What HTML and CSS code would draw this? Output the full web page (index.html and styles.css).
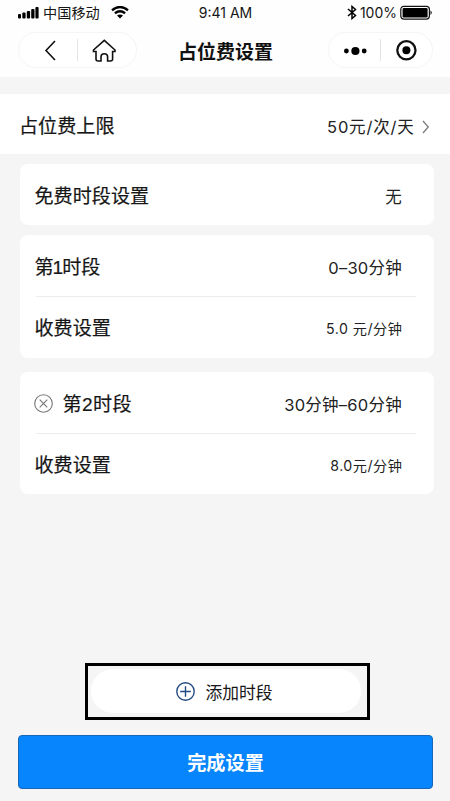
FILE: index.html
```html
<!DOCTYPE html>
<html lang="zh-CN">
<head>
<meta charset="utf-8">
<title>占位费设置</title>
<link rel="stylesheet" href="styles.css">
</head>
<body>
<header class="header">
  <div class="status">
    <div class="status-left">
      <svg class="signal" width="21" height="12" viewBox="0 0 21 12"><rect x="0" y="7" width="3" height="4.5" rx="1"/><rect x="4.3" y="5.5" width="3.3" height="6" rx="1"/><rect x="8.8" y="4" width="3.3" height="7.5" rx="1"/><rect x="13.2" y="2" width="3.3" height="9.5" rx="1"/><rect x="17.4" y="0" width="3.2" height="11.5" rx="1"/></svg>
      <span class="carrier">中国移动</span>
      <svg class="wifi" width="18" height="13" viewBox="0 0 18 13"><path d="M1 4.2Q9-2.2 17 4.2" /><path d="M3.9 7.2Q9 3.2 14.1 7.2"/><path class="fill" d="M6 9.5Q9 7.3 12 9.5L9 12.5Z"/></svg>
    </div>
    <div class="clock">9:41 AM</div>
    <div class="status-right">
      <svg class="bluetooth" width="10" height="15" viewBox="0 0 10 15"><path d="M1 4L8.5 10.5L5 13.5V1.5L8.5 4.5L1 11"/></svg>
      <span class="percent">100%</span>
      <svg class="battery" width="33" height="16" viewBox="0 0 33 16"><rect class="shell" x=".8" y="1.3" width="28.6" height="12.8" rx="3"/><rect x="2.6" y="3" width="25" height="9.4" rx="1.2"/><path d="M30.5 5.5Q33 7.7 30.5 10Z"/></svg>
    </div>
  </div>
  <nav class="nav">
    <div class="capsule capsule-left">
      <svg width="58" height="34" viewBox="0 0 58 34"><path d="M36 8L27 17.5L36 27"/></svg>
      <i class="split"></i>
      <svg width="57" height="34" viewBox="0 0 57 34"><path d="M15.5 17L26.3 7.4L37 17V18.5H34.6V26Q34.6 28 32.5 28H29.6V23.7Q29.6 20.7 26.3 20.7Q23 20.7 23 23.7V28H20Q18 28 18 26V18.5H15.5Z"/></svg>
    </div>
    <h1 class="title">占位费设置</h1>
    <div class="capsule capsule-right">
      <svg class="solid" width="51" height="34" viewBox="0 0 51 34"><circle cx="17.4" cy="18" r="2.4"/><circle cx="26.4" cy="18" r="4.1"/><circle cx="35.2" cy="18" r="2.4"/></svg>
      <i class="split"></i>
      <svg width="51" height="34" viewBox="0 0 51 34"><circle class="ring" cx="25.4" cy="17.3" r="9.1"/><circle class="dot" cx="25.4" cy="17.3" r="4"/></svg>
    </div>
  </nav>
</header>
<main class="content">
  <section class="limit">
    <span class="label">占位费上限</span>
    <span class="value value-limit">50元/次/天</span>
    <svg class="chevron" width="8" height="14" viewBox="0 0 8 14"><path d="M1 1L6.3 7L1 13"/></svg>
  </section>
  <section class="card card-free">
    <div class="row"><span class="label">免费时段设置</span><span class="value">无</span></div>
  </section>
  <section class="card card-first">
    <div class="row"><span class="label">第<span class="one">1</span>时段</span><span class="value">0–30分钟</span></div>
    <hr class="line">
    <div class="row"><span class="label">收费设置</span><span class="value small">5.0 元/分钟</span></div>
  </section>
  <section class="card card-second">
    <div class="row">
      <svg class="remove" width="19" height="19" viewBox="0 0 19 19"><circle cx="9.5" cy="9.5" r="8.8"/><path d="M5.7 5.7L13.3 13.3M13.3 5.7L5.7 13.3"/></svg>
      <span class="label label-second">第2时段</span><span class="value">30分钟–60分钟</span>
    </div>
    <hr class="line">
    <div class="row"><span class="label">收费设置</span><span class="value small">8.0元/分钟</span></div>
  </section>
</main>
<footer class="footer">
  <div class="frame">
    <button class="add">
      <svg width="19" height="19" viewBox="0 0 19 19"><circle cx="9.5" cy="9.5" r="8.7"/><path d="M9.5 4.2V14.8M4.2 9.5H14.8"/></svg>
      <span>添加时段</span>
    </button>
  </div>
  <button class="submit">完成设置</button>
</footer>
</body>
</html>
```
FILE: styles.css
```css
* { box-sizing: border-box; }
body {
  margin: 0;
  height: 801px;
  display: flex;
  flex-direction: column;
  overflow: hidden;
  background: #f5f5f5;
  color: #161616;
  font-family: "Liberation Sans", "Noto Sans CJK SC", sans-serif;
}
svg { display: block; flex: none; }
button { border: 0; padding: 0; font: inherit; color: inherit; }
.header { height: 77px; background: #fefefe; }
.status {
  height: 25px;
  padding: 0 17px 0 18px;
  display: grid;
  grid-template-columns: 1fr auto 1fr;
  align-items: center;
  line-height: 24px;
}
.status-left, .status-right { display: flex; align-items: center; }
.status-right { justify-content: flex-end; }
.carrier { margin-left: 4px; font-size: 14.2px; }
.wifi { margin-left: 11px; fill: none; stroke: #000; stroke-width: 2.4; }
.wifi .fill { fill: #000; stroke: none; }
.clock { font-family: Inter, sans-serif; font-size: 14px; }
.bluetooth { fill: none; stroke: #000; stroke-width: 1.5; }
.percent { margin-left: 3px; font-family: Inter, sans-serif; font-size: 14px; }
.battery { margin-left: 3px; }
.battery .shell { fill: none; stroke: #111; stroke-width: 1.2; }
.nav {
  height: 50px;
  padding: 0 17px 0 18px;
  display: flex;
  align-items: center;
  justify-content: space-between;
}
.capsule {
  height: 36px;
  display: flex;
  align-items: center;
  border: 1px solid #f5f5f5;
  border-radius: 18px;
  background: #fff;
  fill: none;
  stroke: #111;
  stroke-width: 1.6;
}
.capsule-left { width: 119px; }
.capsule-right { width: 105px; }
.solid, .dot { fill: #000; stroke: none; }
.ring { stroke-width: 2.3; }
.split { flex: none; width: 1px; height: 22px; background: #e4e4e4; }
.title { margin: 5px 0 0 -14px; font-size: 19px; line-height: 28px; font-weight: 700; color: #111; }
.limit {
  margin-top: 17px;
  height: 60px;
  padding: 5px 20px 0 19px;
  display: flex;
  align-items: center;
  background: #fff;
}
.label { font-size: 19.1px; line-height: 28px; white-space: nowrap; -webkit-text-stroke: .2px #161616; }
.one { margin: 0 -1px; }
.label-second { letter-spacing: .4px; }
.value {
  margin-left: auto;
  font-family: Inter, "Noto Sans CJK SC", sans-serif;
  font-size: 16.5px;
  line-height: 24px;
  letter-spacing: .25px;
  color: #222;
  white-space: nowrap;
}
.value-limit { letter-spacing: .8px; }
.chevron { margin-left: 7.5px; fill: none; stroke: #777; stroke-width: 1.2; }
.card { margin: 0 16px 0 20px; padding: 0 32px 0 14.5px; background: #fff; border-radius: 8px; }
.card-free { margin-top: 10px; height: 61px; }
.card-first { margin-top: 10px; height: 123px; }
.card-second { margin-top: 14px; height: 122px; }
.row { height: 61px; padding-top: 5px; display: flex; align-items: center; }
.line { margin: 0 -14px -1px 1px; height: 1px; border: 0; background: #ededed; }
.small { margin-right: -.5px; font-size: 14.2px; letter-spacing: .5px; }
.remove { margin: 0 10px 3px -1px; fill: none; stroke: #777; stroke-width: 1.1; }
.footer { margin-top: auto; padding: 0 17px 12px 18px; }
.frame {
  width: 285px;
  height: 57px;
  margin-left: 67px;
  padding: 3px 6px 4px 3px;
  border: 3px solid #000;
}
.add {
  width: 270px;
  height: 44px;
  padding: 1px 3px 0 0;
  display: flex;
  align-items: center;
  justify-content: center;
  gap: 10px;
  border-radius: 22px;
  background: #fff;
  font-size: 16.8px;
}
.add svg { fill: none; stroke: #234c82; stroke-width: 1.4; }
.submit {
  display: block;
  width: 415px;
  height: 54px;
  margin-top: 15px;
  border: 1px solid #1767b8;
  border-radius: 4px;
  background: #0785fd;
  color: #fff;
  font-size: 19.2px;
  font-weight: 700;
}
```
